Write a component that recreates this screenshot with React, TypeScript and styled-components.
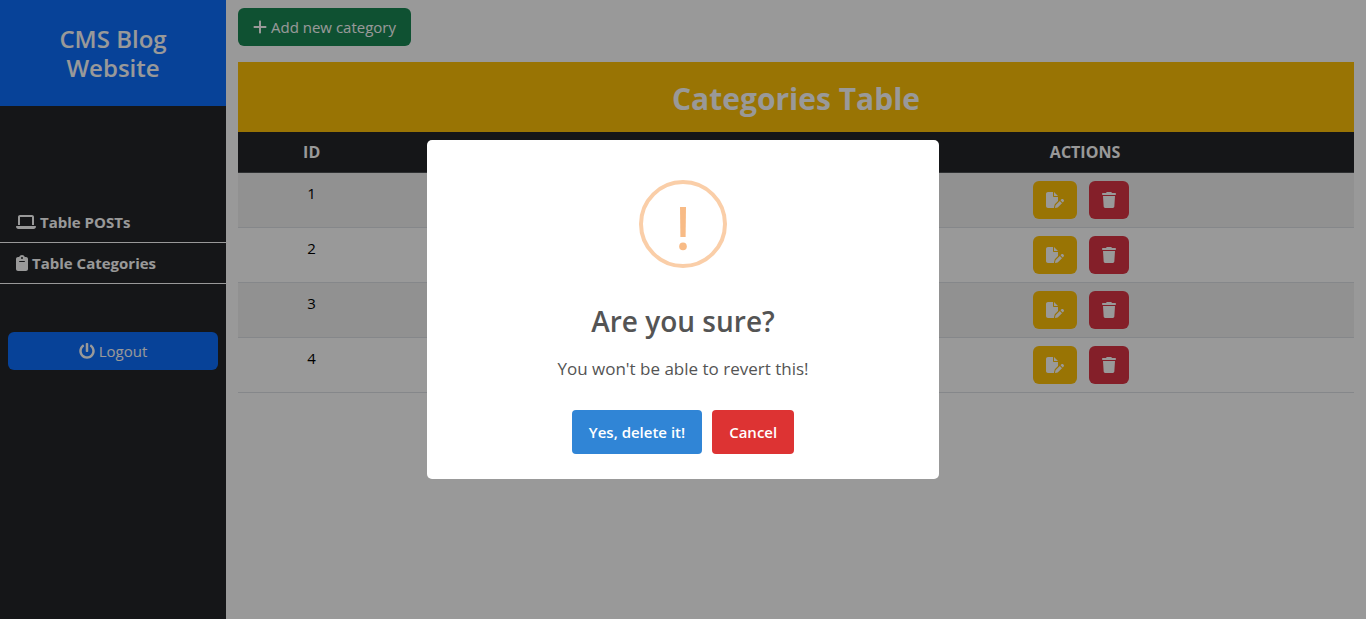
import React from "react";
import styled, { createGlobalStyle } from "styled-components";
import { FaPowerOff } from "react-icons/fa";
import {
  FaClipboard,
  FaFilePen,
  FaLaptop,
  FaPlus,
  FaTrash,
} from "react-icons/fa6";

const GlobalStyle = createGlobalStyle`
  *, *::before, *::after { box-sizing: border-box; }
  body {
    margin: 0;
    background: #fff;
    color: #212529;
    font-family: "Segoe UI", "Open Sans", "Noto Sans", sans-serif;
    font-size: 15px;
    line-height: 24px;
  }
  button { font-family: inherit; cursor: pointer; }
`;

const LaptopIcon = styled(FaLaptop)`
  width: 20px;
  height: 16px;
`;

const ClipboardIcon = styled(FaClipboard)`
  width: 12px;
  height: 16px;
`;

const PowerIcon = styled(FaPowerOff)`
  width: 16px;
  height: 16px;
`;

const PlusIcon = styled(FaPlus)`
  width: 14px;
  height: 16px;
`;

const EditIcon = styled(FaFilePen)`
  width: 18px;
  height: 16px;
`;

const TrashIcon = styled(FaTrash)`
  width: 14px;
  height: 16px;
`;

const Page = styled.div`
  display: flex;
  min-height: 100vh;
`;

const Sidebar = styled.aside`
  flex: 0 0 226px;
  background: #232529;
  color: #fff;
`;

const Brand = styled.h1`
  margin: 0 0 96px;
  padding: 24px;
  background: #0d6efd;
  font-size: 24px;
  font-weight: 600;
  line-height: 29px;
  text-align: center;
`;

const Nav = styled.nav`
  display: flex;
  flex-direction: column;
`;

const NavLink = styled.a`
  display: flex;
  align-items: center;
  gap: 4px;
  padding: 8px 16px;
  border-bottom: 1px solid #fff;
  color: #fff;
  font-weight: 700;
  text-decoration: none;
`;

const Button = styled.button<{ $color: string; $wide?: boolean }>`
  display: inline-flex;
  align-items: center;
  justify-content: center;
  gap: 4px;
  height: 38px;
  padding: 0 ${(p) => (p.$wide ? 15 : 13)}px;
  border: 0;
  border-radius: 6px;
  background: ${(p) => p.$color};
  color: #fff;
  font-size: 15px;
  line-height: 24px;
`;

const LogoutArea = styled.div`
  display: grid;
  padding: 48px 8px;
`;

const Main = styled.main`
  flex: 1;
  min-width: 0;
  padding: 8px 12px;
`;

const Table = styled.table`
  width: 100%;
  margin-top: 16px;
  border-collapse: separate;
  border-spacing: 0;
  table-layout: fixed;
  text-align: center;
`;

const Caption = styled.caption`
  padding: 18px 16px 14px;
  background: #ffc107;
  color: #fff;
  font-size: 30px;
  font-weight: 700;
  line-height: 38px;
`;

const HeadCell = styled.th<{ $width: string }>`
  width: ${(p) => p.$width};
  padding: 8px;
  border-bottom: 1px solid #4d5154;
  background: #232529;
  color: #fff;
  font-size: 16px;
  font-weight: 700;
`;

const Row = styled.tr`
  &:nth-child(odd) { background: #f2f2f2; }
`;

const Cell = styled.td`
  padding: 8px;
  border-bottom: 1px solid #dee2e6;
  color: #000;
  vertical-align: top;
`;

const Actions = styled.div`
  display: flex;
  justify-content: center;
  gap: 12px;
  padding-right: 8px;
`;

const Backdrop = styled.div`
  position: fixed;
  inset: 0;
  display: flex;
  align-items: center;
  justify-content: center;
  padding: 10px;
  background: rgba(0, 0, 0, 0.4);
`;

const Dialog = styled.section`
  display: flex;
  flex-direction: column;
  align-items: center;
  width: 512px;
  max-width: 100%;
  padding: 40px 16px 25px;
  border-radius: 5px;
  background: #fff;
  color: #545454;
  text-align: center;
`;

const DialogTitle = styled.h2`
  margin: 32px 0 0;
  font-size: 28px;
  font-weight: 600;
  line-height: 42px;
`;

const DialogText = styled.p`
  margin: 14px 0 28px;
  font-size: 17px;
  font-weight: 400;
  line-height: 26px;
`;

const DialogActions = styled.div`
  display: flex;
  gap: 10px;
`;

const DialogButton = styled.button<{ $color: string }>`
  height: 44px;
  padding: 0 17px;
  border: 0;
  border-radius: 4px;
  background: ${(p) => p.$color};
  color: #fff;
  font-size: 15px;
  font-weight: 600;
`;

function WarningIcon() {
  return (
    <svg width="88" height="88" viewBox="0 0 88 88" aria-hidden="true">
      <circle cx="44" cy="44" r="42" fill="none" stroke="#facea8" strokeWidth="4" />
      <path d="M41 27h6l-.4 30h-5.2z" fill="#f8bb86" />
      <circle cx="44" cy="66.4" r="3.8" fill="#f8bb86" />
    </svg>
  );
}

const EditButton = styled(Button)`
  min-width: 44px;
`;

const categoryIds = [1, 2, 3, 4];

export default function App() {
  return (
    <>
      <GlobalStyle />
      <Page>
        <Sidebar>
          <Brand>CMS Blog Website</Brand>
          <Nav>
            <NavLink href="#posts">
              <LaptopIcon />
              Table POSTs
            </NavLink>
            <NavLink href="#categories">
              <ClipboardIcon />
              Table Categories
            </NavLink>
          </Nav>
          <LogoutArea>
            <Button type="button" $color="#0d6efd">
              <PowerIcon />
              Logout
            </Button>
          </LogoutArea>
        </Sidebar>
        <Main>
          <Button type="button" $color="#198754" $wide>
            <PlusIcon />
            Add new category
          </Button>
          <Table>
            <Caption>Categories Table</Caption>
            <thead>
              <tr>
                <HeadCell scope="col" $width="13.2%">ID</HeadCell>
                <HeadCell scope="col" $width="38.6%" />
                <HeadCell scope="col" $width="48.2%">ACTIONS</HeadCell>
              </tr>
            </thead>
            <tbody>
              {categoryIds.map((id) => (
                <Row key={id}>
                  <Cell>{id}</Cell>
                  <Cell />
                  <Cell>
                    <Actions>
                      <EditButton type="button" $color="#ffc107" aria-label="Edit">
                        <EditIcon />
                      </EditButton>
                      <Button type="button" $color="#dc3545" aria-label="Delete">
                        <TrashIcon />
                      </Button>
                    </Actions>
                  </Cell>
                </Row>
              ))}
            </tbody>
          </Table>
        </Main>
      </Page>
      <Backdrop>
        <Dialog role="dialog" aria-modal="true" aria-labelledby="confirm-title">
          <WarningIcon />
          <DialogTitle id="confirm-title">Are you sure?</DialogTitle>
          <DialogText>You won't be able to revert this!</DialogText>
          <DialogActions>
            <DialogButton type="button" $color="#3085d6">Yes, delete it!</DialogButton>
            <DialogButton type="button" $color="#dd3333">Cancel</DialogButton>
          </DialogActions>
        </Dialog>
      </Backdrop>
    </>
  );
}
